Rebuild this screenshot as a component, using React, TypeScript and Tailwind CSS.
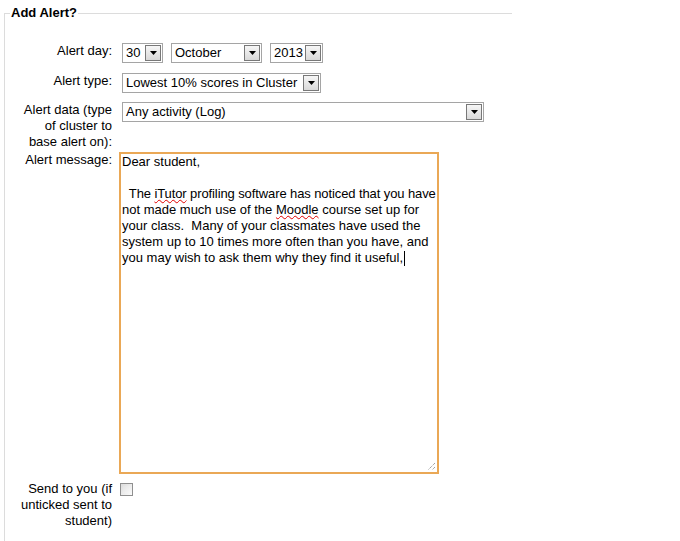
import React from "react";

function Arrow() {
  return (
    <svg width="7" height="4" viewBox="0 0 7 4">
      <path d="M0 0h7L3.5 4z" fill="#000" />
    </svg>
  );
}

function Select({ value, className }: { value: string; className: string }) {
  return (
    <div className={`flex h-[20px] items-center border border-[#a5a5a5] bg-white ${className}`}>
      <span className="flex-1 truncate pl-[3px] leading-4">{value}</span>
      <span className="mr-px flex h-[16px] w-[16px] items-center justify-center border border-[#787878] bg-gradient-to-b from-[#f6f6f6] to-[#d9d9d9]">
        <Arrow />
      </span>
    </div>
  );
}

function Label({ children }: { children: React.ReactNode }) {
  return <div className="ml-[11px] w-[96px] shrink-0 text-right leading-4">{children}</div>;
}

const Squiggle = ({ children }: { children: React.ReactNode }) => (
  <span className="underline decoration-[#e00000] decoration-wavy decoration-1 underline-offset-[1px]">
    {children}
  </span>
);

export default function App() {
  return (
    <div className="min-h-screen bg-white pt-[13px] text-[13px] text-black" style={{ fontFamily: '"Liberation Sans", Arial, sans-serif' }}>
      <div className="relative ml-[4px] h-[540px] w-[508px] border-l border-t border-[#dcdcdc]">
        {/* legend */}
        <div className="absolute left-[5px] top-[-9px] bg-white px-px text-[13px] font-bold leading-4">
          Add Alert?
        </div>

        <div className="flex flex-col pt-[29px]">
          {/* Alert day */}
          <div className="flex items-start gap-[7px]">
            <Label>Alert day:</Label>
            <div className="ml-[3px] flex gap-[8px]">
              <Select value="30" className="w-[41px]" />
              <Select value="October" className="w-[91px]" />
              <Select value="2013" className="w-[53px]" />
            </div>
          </div>

          {/* Alert type */}
          <div className="mt-[10px] flex items-start gap-[7px]">
            <Label>Alert type:</Label>
            <Select value="Lowest 10% scores in Cluster" className="ml-[3px] w-[199px]" />
          </div>

          {/* Alert data */}
          <div className="mt-[9px] flex items-start gap-[7px]">
            <Label>Alert data (type of cluster to base alert on):</Label>
            <Select value="Any activity (Log)" className="ml-[3px] w-[362px]" />
          </div>

          {/* Alert message */}
          <div className="mt-[2px] flex items-start gap-[7px]">
            <Label>Alert message:</Label>
            <div className="relative h-[322px] w-[320px] border-2 border-[#eaa856] bg-white pl-px leading-4 whitespace-pre">
              <div>Dear student,</div>
              <div>&nbsp;</div>
              <div className="tracking-[-0.1px]">
                {"  The "}
                <Squiggle>iTutor</Squiggle>
                {" profiling software has noticed that you have"}
              </div>
              <div>
                {"not made much use of the "}
                <Squiggle>Moodle</Squiggle>
                {" course set up for"}
              </div>
              <div>{"your class.  Many of your classmates have used the"}</div>
              <div>{"system up to 10 times more often than you have, and"}</div>
              <div className="flex items-center">
                {"you may wish to ask them why they find it useful,"}
                <span className="ml-px inline-block h-[15px] w-px bg-black" />
              </div>
              {/* resize grip */}
              <svg className="absolute bottom-px right-px" width="9" height="9" viewBox="0 0 9 9">
                <path d="M8 1L1 8M8 5L5 8" stroke="#7a7a7a" strokeWidth="1" strokeDasharray="1 1" />
              </svg>
            </div>
          </div>

          {/* Send to you */}
          <div className="mt-[7px] flex items-start gap-[7px]">
            <Label>Send to you (if unticked sent to student)</Label>
            <span className="ml-px mt-[2px] h-[13px] w-[13px] border border-[#8f8f8f] bg-gradient-to-br from-[#dcdcdc] to-[#fbfbfb] p-[2px]">
              <span className="block h-full w-full bg-gradient-to-br from-[#e4e4e4] to-[#f7f7f7]" />
            </span>
          </div>
        </div>
      </div>
    </div>
  );
}
